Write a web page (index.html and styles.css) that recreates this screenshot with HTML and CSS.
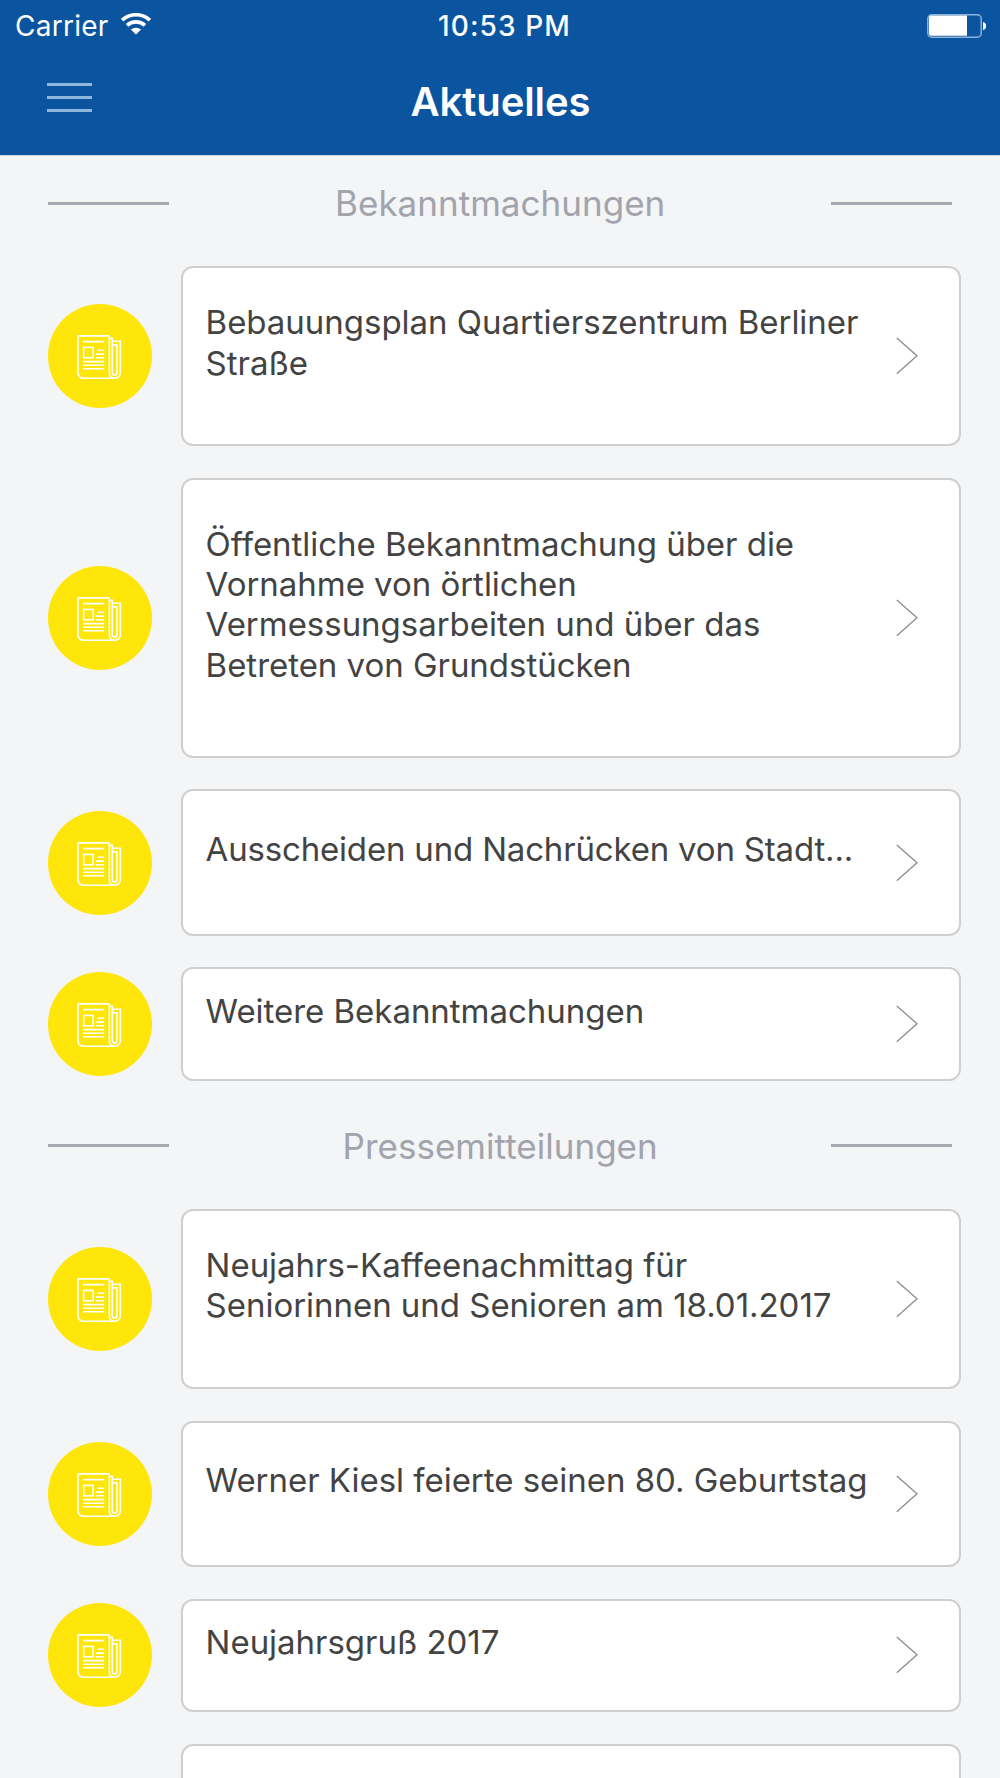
FILE: index.html
```
<!DOCTYPE html>
<html lang="de">
	<head>
		<meta charset="utf-8">
		<meta name="viewport" content="initial-scale=1.0">
		<title>Aktuelles</title>
		<link rel="stylesheet" href="styles.css">
	</head>
	<body>

		<!-- icon used by every news row -->
		<svg class="sprite" width="0" height="0">
			<symbol id="newspaper" viewBox="0 0 45 45">
				<path d="M32.3 .9H1V38a5.2 5.2 0 0 0 5.2 5.2H38a5.3 5.3 0 0 0 5.3-5.3V6.3h-8"/>
				<path d="M32.3 .9V37.5q0 5.7 5.2 5.7M32.3 3.4h3V37.5a2.35 2.6 0 0 0 4.7 0V9.9h-4.5"/>
				<path d="M6 6.6h21.2M20.7 15.3h6.5M18.7 19.1h8.5M18.7 22.8h8.5M6 26.6h21.2M6 30.2h21.2M6 33.8h21.2"/>
				<rect x="6.7" y="12.4" width="9.4" height="10.4"/>
			</symbol>
			<symbol id="arrow" viewBox="0 0 22 38">
				<path d="M.8 1 21 18.8 .8 36.8"/>
			</symbol>
		</svg>

		<header class="header">
			<div class="statusbar">
				<div class="carrier">
					<span>Carrier</span>
					<svg class="wifi" width="30" height="23" viewBox="0 0 30 23">
						<path d="M1.2 7.2a20 20 0 0 1 27.6 0M6 12.4a13.2 13.2 0 0 1 18 0"/>
						<path class="dot" d="M15 21.6 9.9 16.6a7.6 7.6 0 0 1 10.2 0z"/>
					</svg>
				</div>
				<div class="time">10:53 PM</div>
				<svg class="battery" width="60" height="24" viewBox="0 0 60 24">
					<rect class="frame" x=".8" y=".8" width="53.4" height="22.4" rx="4"/>
					<path d="M4 1.5H40V21.8H4A2 2 0 0 1 2 19.8V3.5a2 2 0 0 1 2-2zM56 8a4 4.2 0 0 1 0 8.2z"/>
				</svg>
			</div>
			<div class="navbar">
				<div class="menu"><i></i><i></i><i></i></div>
				<h1>Aktuelles</h1>
			</div>
		</header>

		<main class="content">
			<h2>Bekanntmachungen</h2>
			<div class="row">
				<div class="icon"><svg><use href="#newspaper"/></svg></div>
				<div class="card lines-2">
					<p>Bebauungsplan Quartierszentrum Berliner<br>Straße</p>
					<svg class="arrow"><use href="#arrow"/></svg>
				</div>
			</div>
			<div class="row">
				<div class="icon"><svg><use href="#newspaper"/></svg></div>
				<div class="card lines-4">
					<p>Öffentliche Bekanntmachung über die<br>Vornahme von örtlichen<br>Vermessungsarbeiten und über das<br>Betreten von Grundstücken</p>
					<svg class="arrow"><use href="#arrow"/></svg>
				</div>
			</div>
			<div class="row">
				<div class="icon"><svg><use href="#newspaper"/></svg></div>
				<div class="card lines-1">
					<p class="tight">Ausscheiden und Nachrücken von Stadt...</p>
					<svg class="arrow"><use href="#arrow"/></svg>
				</div>
			</div>
			<div class="row">
				<div class="icon"><svg><use href="#newspaper"/></svg></div>
				<div class="card small">
					<p>Weitere Bekanntmachungen</p>
					<svg class="arrow"><use href="#arrow"/></svg>
				</div>
			</div>

			<h2>Pressemitteilungen</h2>
			<div class="row">
				<div class="icon"><svg><use href="#newspaper"/></svg></div>
				<div class="card lines-2">
					<p>Neujahrs-Kaffeenachmittag für<br>Seniorinnen und Senioren am 18.01.2017</p>
					<svg class="arrow"><use href="#arrow"/></svg>
				</div>
			</div>
			<div class="row">
				<div class="icon"><svg><use href="#newspaper"/></svg></div>
				<div class="card lines-1">
					<p>Werner Kiesl feierte seinen 80. Geburtstag</p>
					<svg class="arrow"><use href="#arrow"/></svg>
				</div>
			</div>
			<div class="row">
				<div class="icon"><svg><use href="#newspaper"/></svg></div>
				<div class="card small">
					<p>Neujahrsgruß 2017</p>
					<svg class="arrow"><use href="#arrow"/></svg>
				</div>
			</div>
			<div class="row last">
				<div class="card"></div>
			</div>
		</main>

	</body>
</html>
```
FILE: styles.css
```
* {
	box-sizing: border-box;
}

body {
	display: flex;
	flex-direction: column;
	margin: 0;
	height: 1778px;
	background: #f3f5f7;
	color: #434343;
	font-family: Inter, "Liberation Sans", sans-serif;
	font-variant-ligatures: none;
	font-feature-settings: "calt" 0;
}

.sprite {
	position: absolute;
}

/* header */
.header {
	flex: none;
	height: 156px;
	background: #0b54a0;
	border-bottom: 1px solid #d3d3dc;
	color: #fff;
}

.statusbar {
	display: grid;
	grid-template-columns: 1fr auto 1fr;
	align-items: center;
	height: 51px;
	padding: 0 13px 0 15px;
	font-size: 28px;
}

.carrier {
	display: flex;
	align-items: center;
	gap: 12px;
	letter-spacing: .25px;
}

.wifi {
	fill: none;
	stroke: #fff;
	stroke-width: 3.6;
	margin-bottom: 3px;
}

.wifi .dot {
	fill: #fff;
	stroke: none;
}

.time {
	padding-left: 7px;
	font-weight: 500;
	letter-spacing: 1.1px;
}

.battery {
	justify-self: end;
	fill: #fff;
}

.battery .frame {
	fill: none;
	stroke: #8db3da;
	stroke-width: 1.5;
}

.navbar {
	display: grid;
	grid-template-columns: 100px 1fr 100px;
	height: 104px;
}

.menu {
	display: flex;
	flex-direction: column;
	gap: 10px;
	padding: 32px 0 0 47px;
}

.menu i {
	width: 45px;
	height: 3px;
	background: #8db8dc;
}

h1 {
	margin: 26px 0 0 1px;
	font-size: 40px;
	font-weight: 600;
	letter-spacing: -.1px;
	line-height: 50px;
	text-align: center;
}

/* list */
.content {
	flex: 1;
	min-height: 0;
	overflow: hidden;
	padding: 14.3px 39px 0 48.3px;
}

h2 {
	display: flex;
	align-items: center;
	justify-content: space-between;
	height: 66px;
	margin: 0 9px 29.9px 0;
	color: #a2a3ab;
	font-size: 35px;
	font-weight: 400;
	letter-spacing: .02px;
	line-height: 42px;
}

h2:before,
h2:after {
	content: "";
	width: 121px;
	height: 3px;
	background: #a7a8b0;
}

.row {
	display: flex;
	align-items: center;
	justify-content: flex-end;
	margin-bottom: 31.7px;
}

.icon {
	width: 104px;
	height: 104px;
	margin-right: auto;
	padding: 31px 0 0 28.7px;
	border-radius: 50%;
	background: #ffe60a;
}

.icon svg {
	display: block;
	width: 45px;
	height: 45px;
	fill: none;
	stroke: #fff;
	stroke-width: 1.6;
}

.card {
	display: flex;
	justify-content: space-between;
	width: 780px;
	padding: 0 41px 0 22.6px;
	background: #fff;
	border: 2px solid #cfcfcf;
	border-radius: 12px;
}

.card p {
	margin: 0;
	font-size: 33px;
	letter-spacing: -.03px;
	line-height: 40.3px;
	white-space: nowrap;
}

.card .tight {
	letter-spacing: -.18px;
}

.arrow {
	align-self: center;
	width: 22px;
	height: 38px;
	fill: none;
	stroke: #8c8c8c;
	stroke-width: 1.3;
}

/* card heights by number of text lines */
.small {
	height: 113.7px;
}

.small p {
	padding-top: 21.3px;
}

.lines-1 {
	height: 146.3px;
}

.lines-1 p {
	padding-top: 37.3px;
}

.lines-2 {
	height: 180.2px;
}

.lines-2 p {
	padding-top: 34.2px;
}

.lines-4 {
	height: 279.7px;
}

.lines-4 p {
	padding-top: 43.6px;
}

/* runs off at the bottom of the screen */
.last {
	margin-bottom: 0;
}

.last .card {
	height: 34px;
	border-bottom: 0;
	border-radius: 12px 12px 0 0;
}
```
